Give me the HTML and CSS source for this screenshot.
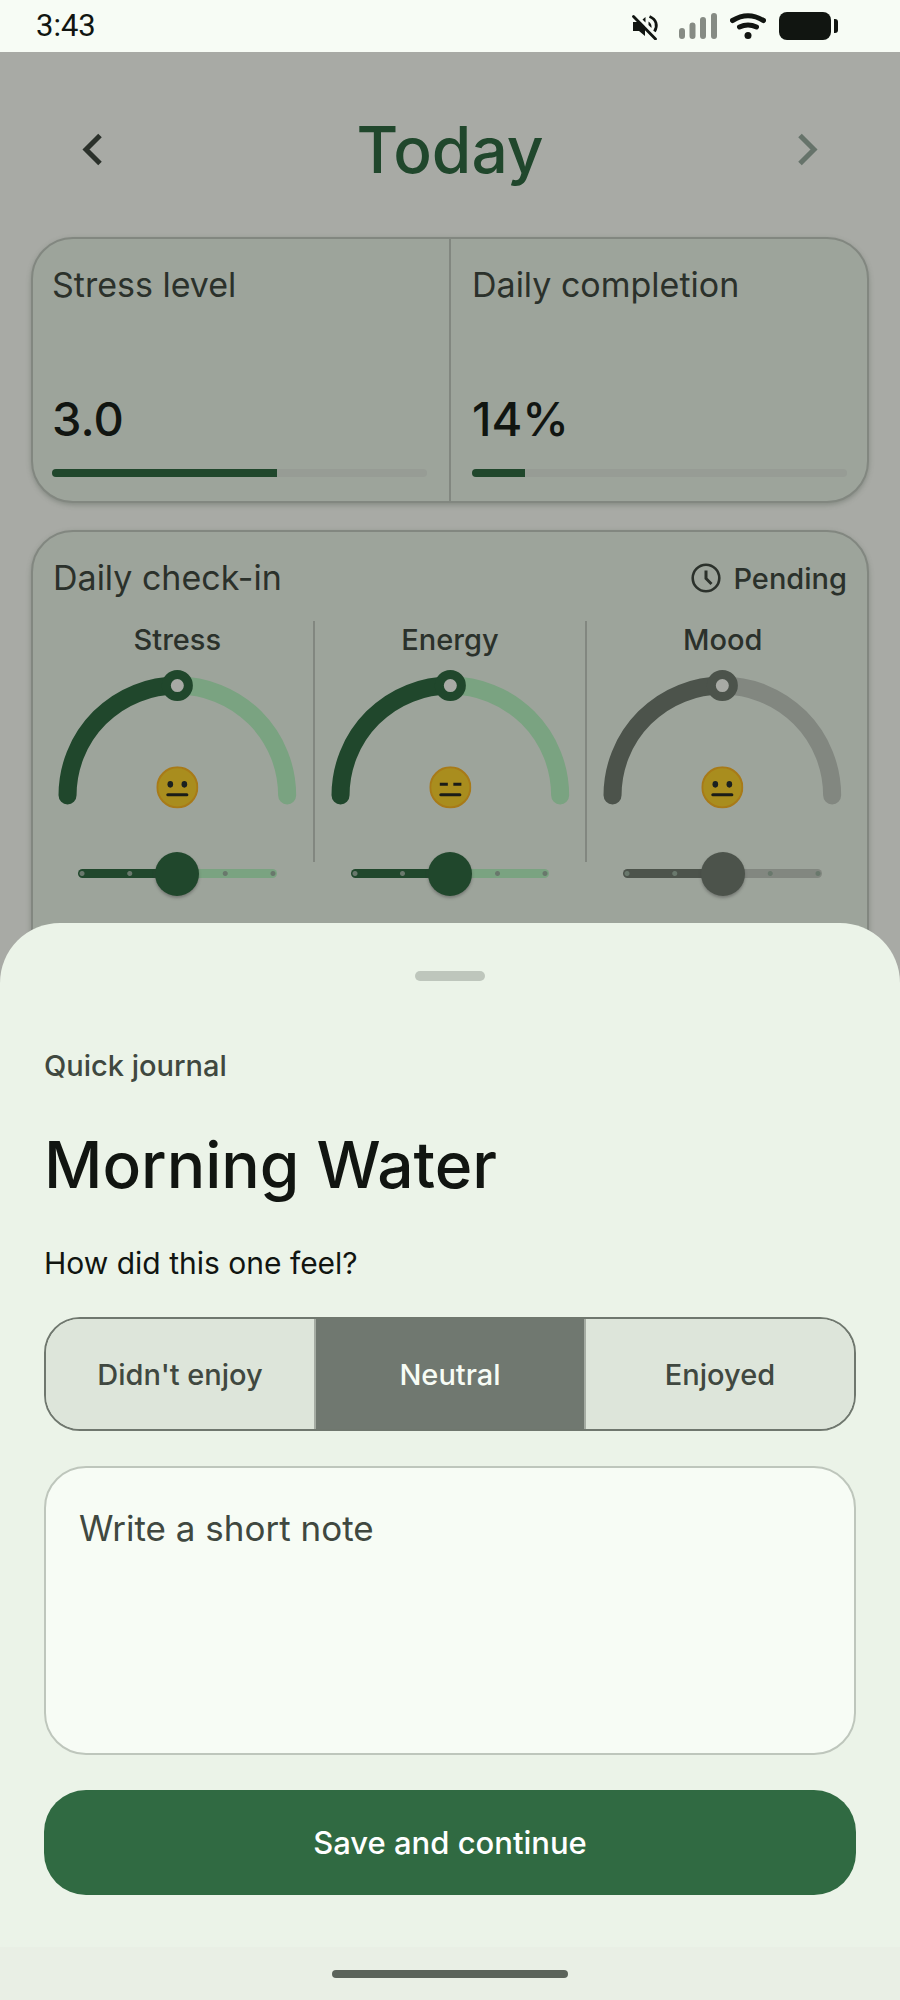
FILE: index.html
```html
<!DOCTYPE html>
<html lang="en">
<head>
<meta charset="utf-8">
<meta name="viewport" content="width=device-width, initial-scale=1">
<title>Quick journal</title>
<link rel="stylesheet" href="styles.css">
</head>
<body>
<svg class="defs" aria-hidden="true">
  <symbol id="face" viewBox="0 0 42 42">
    <circle cx="21" cy="21" r="20" fill="#a98d1e" stroke="#a87a18" stroke-width="2"/>
    <path d="M11.500 28.500h19" stroke="#1a1c18" stroke-width="3" stroke-linecap="round"/>
  </symbol>
</svg>
<div class="screen">
  <header class="status">
    <span class="clock">3:43</span>
    <div class="status-icons">
      <svg width="34" height="28" viewBox="0 0 34 28" aria-hidden="true">
        <path d="M1 10h8l4 4v10l-6-5H1z" fill="#111511"/>
        <path d="M10.500 7.500L13.500 5v5.500zM16.500 9.500q3.500 2 3 6.500l-3-3z" fill="#111511"/>
        <path d="M17.500 4.500c7 3 8.500 9 5 15" fill="none" stroke="#111511" stroke-width="2.800"/>
        <path d="M4 4l21.500 21.500" stroke="#f7fcf5" stroke-width="2"/>
        <path d="M1.500 4.500l22 22.500" stroke="#111511" stroke-width="2.800" stroke-linecap="round"/>
      </svg>
      <svg width="38" height="28" viewBox="0 0 38 28" aria-hidden="true" stroke="#868b84" stroke-width="6" stroke-linecap="round">
        <path d="M3 19v5M13.500 13.500V24M24 8v16M35 4v20"/>
      </svg>
      <svg width="36" height="28" viewBox="0 0 36 28" aria-hidden="true">
        <path d="M2.500 8.500Q18-1 33.500 8.500M9.500 15q8.500-4 17 0" fill="none" stroke="#111511" stroke-width="5" stroke-linecap="round"/>
        <circle cx="18" cy="23.500" r="3.500" fill="#111511"/>
      </svg>
      <svg width="59" height="28" viewBox="0 0 59 28" aria-hidden="true" fill="#111511">
        <rect width="52" height="28" rx="8"/>
        <path d="M55 7h1q3 0 3 3v8q0 3-3 3h-1z"/>
      </svg>
    </div>
  </header>

  <main class="today">
    <div class="day-nav">
      <button class="icon-btn" aria-label="Previous day">
        <svg width="48" height="48" viewBox="0 0 48 48" fill="none" stroke="#2b312b" stroke-width="5"><path d="M32 9.500L18 23.500l14 14"/></svg>
      </button>
      <h1>Today</h1>
      <button class="icon-btn" aria-label="Next day">
        <svg width="48" height="48" viewBox="0 0 48 48" fill="none" stroke="#66736a" stroke-width="5"><path d="M16 9.500l14 14-14 14"/></svg>
      </button>
    </div>

    <section class="card stats">
      <div class="stat">
        <label class="card-title" for="stress-level">Stress level</label>
        <span class="stat-value">3.0</span>
        <progress id="stress-level" value="3" max="5"></progress>
      </div>
      <div class="stat">
        <label class="card-title" for="completion">Daily completion</label>
        <span class="stat-value">14%</span>
        <progress id="completion" value="14" max="100"></progress>
      </div>
    </section>

    <section class="card checkin">
      <div class="checkin-head">
        <h2 class="card-title">Daily check-in</h2>
        <span class="pending">
          <svg width="30" height="30" viewBox="0 0 30 30" fill="none" stroke="#2b312b" stroke-width="2.600" aria-hidden="true"><circle cx="15" cy="15" r="13.300"/><path d="M15 7.500V15.500l5.500 5.500" stroke-width="3"/></svg>
          Pending
        </span>
      </div>
      <div class="gauges">
        <div class="gauge">
          <label for="stress">Stress</label>
          <svg viewBox="0 0 248 150" aria-hidden="true">
            <g fill="none" stroke-width="18" stroke-linecap="round">
              <path d="M124 26.500A109.500 109.500 0 0 1 233.500 136" stroke="#7aa381"/>
              <path d="M14.500 136A109.500 109.500 0 0 1 124 26.500" stroke="#20472c"/>
            </g>
            <circle cx="124" cy="26.500" r="11" fill="#a8aaa5" stroke="#20472c" stroke-width="9"/>
            <use href="#face" x="103" y="107" width="42" height="42"/>
            <g fill="#1a2020"><ellipse cx="117" cy="125" rx="2.800" ry="3.300"/><ellipse cx="131" cy="125" rx="2.800" ry="3.300"/></g>
          </svg>
          <input id="stress" type="range" min="1" max="5" value="3">
        </div>
        <div class="divider"></div>
        <div class="gauge">
          <label for="energy">Energy</label>
          <svg viewBox="0 0 248 150" aria-hidden="true">
            <g fill="none" stroke-width="18" stroke-linecap="round">
              <path d="M124 26.500A109.500 109.500 0 0 1 233.500 136" stroke="#7aa381"/>
              <path d="M14.500 136A109.500 109.500 0 0 1 124 26.500" stroke="#20472c"/>
            </g>
            <circle cx="124" cy="26.500" r="11" fill="#a8aaa5" stroke="#20472c" stroke-width="9"/>
            <use href="#face" x="103" y="107" width="42" height="42"/>
            <path d="M113.500 125h8M127 125h8" stroke="#1a1c18" stroke-width="3"/>
          </svg>
          <input id="energy" type="range" min="1" max="5" value="3">
        </div>
        <div class="divider"></div>
        <div class="gauge neutral">
          <label for="mood">Mood</label>
          <svg viewBox="0 0 248 150" aria-hidden="true">
            <g fill="none" stroke-width="18" stroke-linecap="round">
              <path d="M124 26.500A109.500 109.500 0 0 1 233.500 136" stroke="#828780"/>
              <path d="M14.500 136A109.500 109.500 0 0 1 124 26.500" stroke="#4c534b"/>
            </g>
            <circle cx="124" cy="26.500" r="11" fill="#a8aaa5" stroke="#4c534b" stroke-width="9"/>
            <use href="#face" x="103" y="107" width="42" height="42"/>
            <g fill="#1a2020"><ellipse cx="117" cy="125" rx="2.800" ry="3.300"/><ellipse cx="131" cy="125" rx="2.800" ry="3.300"/></g>
          </svg>
          <input id="mood" type="range" min="1" max="5" value="3">
        </div>
      </div>
    </section>
  </main>

  <section class="sheet" role="dialog" aria-labelledby="sheet-title">
    <form class="journal">
      <div class="handle"></div>
      <p class="eyebrow">Quick journal</p>
      <h2 class="sheet-title" id="sheet-title">Morning Water</h2>
      <p class="question" id="question">How did this one feel?</p>
      <div class="segments" role="radiogroup" aria-labelledby="question">
        <label><input type="radio" name="feel">Didn't enjoy</label>
        <label><input type="radio" name="feel" checked>Neutral</label>
        <label><input type="radio" name="feel">Enjoyed</label>
      </div>
      <textarea placeholder="Write a short note" aria-label="Write a short note"></textarea>
      <button class="save" type="button">Save and continue</button>
    </form>
    <div class="system-nav"><div class="home-bar"></div></div>
  </section>
</div>
</body>
</html>
```
FILE: styles.css
```css
* {
  box-sizing: border-box;
}

body,
h1,
h2,
p {
  margin: 0;
  font-weight: 500;
}

body {
  background: #a8aaa5;
  font-family: Inter, Roboto, sans-serif;
  color: #2b312b;
}

button,
textarea {
  font-family: inherit;
}

.defs {
  display: none;
}

.screen {
  position: relative;
  min-height: 100vh;
  overflow: hidden;
}

.status {
  display: flex;
  align-items: center;
  justify-content: space-between;
  height: 52px;
  padding: 0 62px 0 36px;
  background: #f7fcf5;
  color: #111511;
}

.clock {
  font: 400 31px/40px Roboto, sans-serif;
}

.status-icons {
  display: flex;
  gap: 13px;
}

.today {
  padding: 0 31px;
}

.day-nav {
  display: flex;
  align-items: center;
  justify-content: space-between;
  height: 185px;
  padding: 11px 37px 0;
}

.day-nav h1 {
  font-size: 64px;
  line-height: 80px;
  color: #20472c;
}

.icon-btn {
  display: flex;
  padding: 0;
  border: 0;
  background: none;
}

.card {
  border: 2px solid #828780;
  border-radius: 42px;
  background: #9da49b;
  box-shadow: 0 2px 5px rgba(70, 80, 70, 0.35);
}

.card-title {
  font-size: 34px;
  font-weight: 400;
  line-height: 44px;
}

.stats {
  display: flex;
  margin-bottom: 27px;
}

.stat {
  flex: 1;
  display: flex;
  flex-direction: column;
  padding: 24px 22px 24px 19px;
}

.stat + .stat {
  padding: 24px 20px 24px 21px;
  border-left: 2px solid #828780;
}

.stat-value {
  margin: 80px 0 18px;
  font-size: 47px;
  font-weight: 500;
  line-height: 64px;
  color: #111511;
}

progress {
  appearance: none;
  display: block;
  width: 100%;
  height: 8px;
  border: 0;
  border-radius: 4px;
  overflow: hidden;
}

progress::-webkit-progress-bar {
  background: #979c95;
}

progress::-webkit-progress-value {
  background: #20472c;
}

.checkin {
  padding: 24px 20px 120px;
}

.checkin-head {
  display: flex;
  align-items: center;
  justify-content: space-between;
  margin-bottom: 21px;
}

.pending {
  display: flex;
  align-items: center;
  gap: 12px;
  font-size: 29px;
  font-weight: 500;
}

.gauges {
  display: flex;
  gap: 11px;
}

.divider {
  width: 2px;
  height: 241px;
  background: #828780;
}

.gauge {
  --on: #20472c;
  --off: #7aa381;
  --dot: #69786c;
  flex: 1;
  display: flex;
  flex-direction: column;
  align-items: center;
  font-size: 29px;
  font-weight: 500;
  line-height: 38px;
}

.gauge.neutral {
  --on: #4c534b;
  --off: #828780;
}

.gauge svg {
  width: 100%;
}

.gauge input {
  appearance: none;
  width: 80%;
  height: 9px;
  margin: 60px 0 18px;
  border-radius: 5px;
  background:
    radial-gradient(circle at 4px, var(--dot) 2px, transparent 3px),
    radial-gradient(circle at 26%, var(--dot) 2px, transparent 3px),
    radial-gradient(circle at 74%, var(--dot) 2px, transparent 3px),
    radial-gradient(circle at calc(100% - 4px), var(--dot) 2px, transparent 3px),
    linear-gradient(to right, var(--on) 50%, var(--off) 50%);
}

.gauge input::-webkit-slider-thumb {
  appearance: none;
  width: 44px;
  height: 44px;
  border-radius: 50%;
  background: var(--on);
  box-shadow: 0 2px 3px rgba(60, 60, 60, 0.4);
}

.sheet {
  position: absolute;
  right: 0;
  bottom: 0;
  left: 0;
  overflow: hidden;
  border-radius: 60px 60px 0 0;
  background: #ebf3e8;
}

.journal {
  display: flex;
  flex-direction: column;
  padding: 48px 44px 52px;
}

.handle {
  align-self: center;
  width: 70px;
  height: 10px;
  border-radius: 5px;
  background: #bec6bc;
}

.eyebrow {
  margin-top: 65px;
  font-size: 29px;
  line-height: 40px;
  color: #404840;
}

.sheet-title {
  margin-top: 39px;
  font-size: 64px;
  line-height: 80px;
  color: #111511;
}

.question {
  margin-top: 38px;
  font-size: 30px;
  font-weight: 400;
  line-height: 40px;
  color: #111511;
}

.segments {
  display: flex;
  height: 114px;
  margin-top: 34px;
  overflow: hidden;
  border: 2px solid #6f776e;
  border-radius: 36px;
}

.segments label {
  flex: 1;
  display: flex;
  align-items: center;
  justify-content: center;
  background: #dde5da;
  font-size: 29px;
  font-weight: 500;
  color: #404840;
}

.segments label + label {
  border-left: 2px solid #a5aca3;
}

.segments label:has(:checked) {
  background: #707870;
  color: #f7fcf5;
}

.segments input {
  appearance: none;
  width: 0;
  height: 0;
  margin: 0;
}

textarea {
  height: 289px;
  margin-top: 35px;
  padding: 38px 33px;
  border: 2px solid #bec6bc;
  border-radius: 42px;
  background: #f7fcf5;
  font-size: 35px;
  line-height: 44px;
  color: #111511;
  resize: none;
}

textarea::placeholder {
  color: #404840;
}

.save {
  height: 105px;
  margin-top: 35px;
  border: 0;
  border-radius: 42px;
  background: #306a42;
  font-size: 31px;
  font-weight: 500;
  color: #fff;
}

.system-nav {
  display: flex;
  justify-content: center;
  height: 53px;
  padding-top: 23px;
  background: #e9efe5;
}

.home-bar {
  width: 236px;
  height: 8px;
  border-radius: 4px;
  background: #5b635a;
}
```
